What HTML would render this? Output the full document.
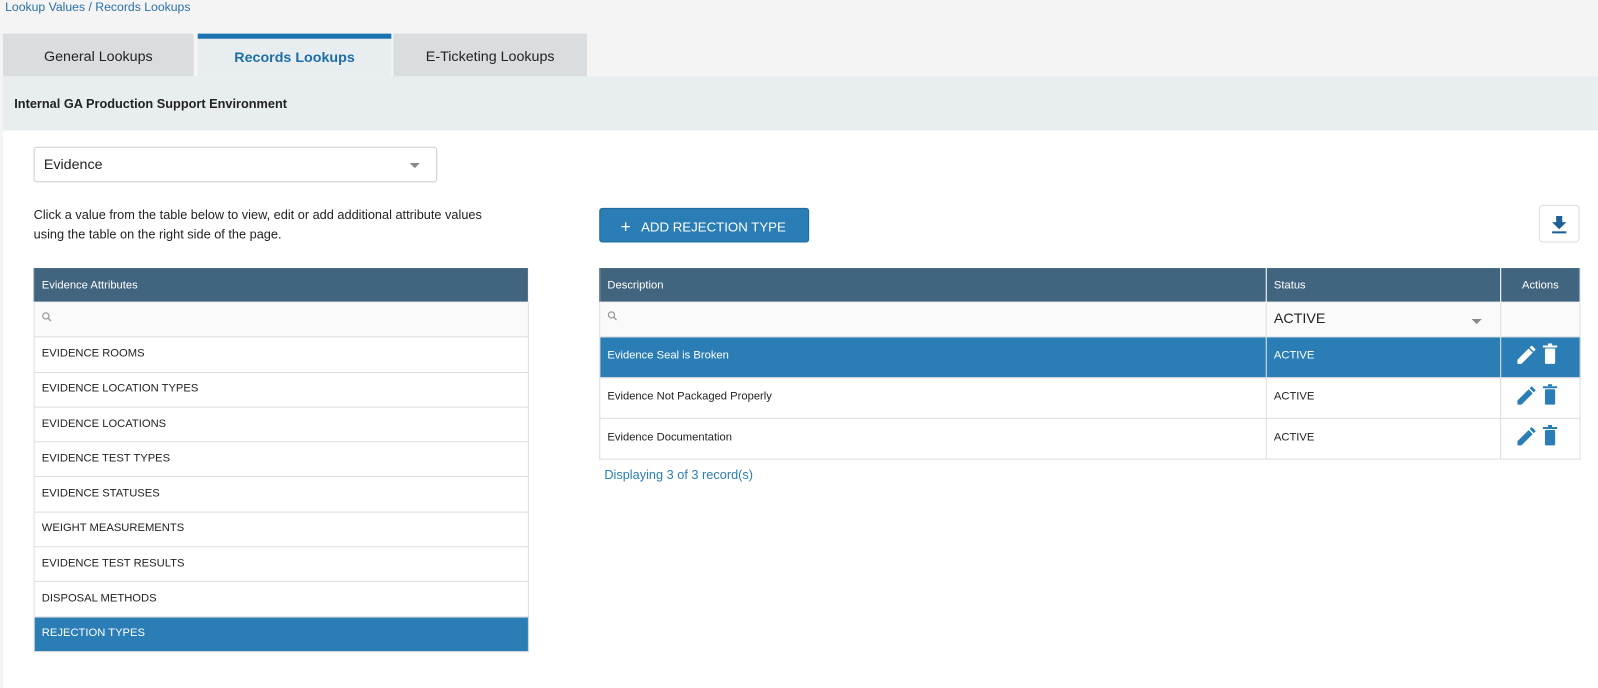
<!DOCTYPE html>
<html><head><style>
*{box-sizing:border-box;margin:0;padding:0}
body{width:1598px;height:672px;background:#f4f4f4;font-family:"Liberation Sans",sans-serif;position:relative;overflow:hidden;color:#222}
#w{position:absolute;left:0;top:0;width:1568px;height:660px;transform:scale(1.0191);transform-origin:0 0}
.a{position:absolute}
.crumb{left:5px;top:0;font-size:12px;color:#2c6fa8}
.tab{top:33px;height:42px;width:187px;background:#d9dddf;font-size:14px;text-align:center;line-height:44px;color:#222}
.main{left:3px;top:75px;width:1565px;height:600px;background:#fff}
.band{left:3px;top:75px;width:1565px;height:53px;background:#e8edf0;font-size:12.5px;font-weight:bold;padding:20px 0 0 11px}
.sel{left:33px;top:144px;width:396px;height:35px;border:1px solid #ccc;border-radius:3px;background:#fff;font-size:14px;padding:8px 0 0 9px}
.tri{width:0;height:0;border-left:5px solid transparent;border-right:5px solid transparent;border-top:5px solid #888}
table{position:absolute;border-collapse:collapse;font-size:11px}
td,th{border:1px solid #ddd;padding:0 7px;text-align:left;font-weight:normal}
th{background:#41657f;color:#fff;height:34px;border-color:#fff #fff #fff #41657f}
.srch td{background:#fafafa;height:34px}
.sel1 td{background:#2a7db5;color:#fff}
.l td{height:34.3px;padding-bottom:2px}
.r td{padding-bottom:4px}
</style></head><body><div id="w">
<div class="a crumb">Lookup Values / Records Lookups</div>
<div class="a tab" style="left:3px">General Lookups</div>
<div class="a tab" style="left:194px;width:190px;background:#e8edf0;border-top:5px solid #1a73b0;line-height:36px;color:#1d6ea8;font-weight:bold">Records Lookups</div>
<div class="a tab" style="left:386px;width:190px">E-Ticketing Lookups</div>
<div class="a main"></div>
<div class="a band">Internal GA Production Support Environment</div>
<div class="a sel">Evidence<div class="a tri" style="right:16px;top:15px"></div></div>
<div class="a" style="left:33px;top:202px;font-size:12.5px;line-height:19px;width:440px">Click a value from the table below to view, edit or add additional attribute values using the table on the right side of the page.</div>
<div class="a" style="left:588px;top:204px;width:206px;height:34px;background:#2a7db5;border:1px solid #1f6a9c;border-radius:3px;color:#fff;font-size:13px;padding:7px 0 0 20px"><span style="font-size:17px;position:relative;top:1px">+</span>&nbsp;&nbsp; ADD REJECTION TYPE</div>
<div class="a" style="left:1510px;top:201px;width:40px;height:37px;border:1px solid #ddd;border-radius:4px;background:#fff">
<svg width="40" height="37" style="position:absolute;left:-1px;top:-1px"><path d="M17 11h6v6h4l-7 7-7-7h4z" fill="#1d5f96"/><rect x="13" y="26" width="14" height="2" fill="#1d5f96"/></svg></div>

<table class="l" style="left:33px;top:262px;width:486px">
<tr><th>Evidence Attributes</th></tr>
<tr class="srch"><td><svg width="10" height="10"><circle cx="4" cy="4" r="3" fill="none" stroke="#999" stroke-width="1.2"/><path d="M6 6l3 3" stroke="#999" stroke-width="1.3"/></svg></td></tr>
<tr><td>EVIDENCE ROOMS</td></tr>
<tr><td>EVIDENCE LOCATION TYPES</td></tr>
<tr><td>EVIDENCE LOCATIONS</td></tr>
<tr><td>EVIDENCE TEST TYPES</td></tr>
<tr><td>EVIDENCE STATUSES</td></tr>
<tr><td>WEIGHT MEASUREMENTS</td></tr>
<tr><td>EVIDENCE TEST RESULTS</td></tr>
<tr><td>DISPOSAL METHODS</td></tr>
<tr class="sel1"><td>REJECTION TYPES</td></tr>
</table>

<table class="r" style="left:588px;top:262px;width:963px">
<tr><th style="width:654px">Description</th><th style="width:230px">Status</th><th style="text-align:center">Actions</th></tr>
<tr class="srch"><td><svg width="10" height="10"><circle cx="4" cy="4" r="3" fill="none" stroke="#999" stroke-width="1.2"/><path d="M6 6l3 3" stroke="#999" stroke-width="1.3"/></svg></td><td style="font-size:14px;position:relative">ACTIVE<div class="a tri" style="right:18px;top:16px"></div></td><td></td></tr>
<tr class="sel1"><td style="height:40px">Evidence Seal is Broken</td><td>ACTIVE</td><td></td></tr>
<tr><td style="height:40px">Evidence Not Packaged Properly</td><td>ACTIVE</td><td></td></tr>
<tr><td style="height:40px">Evidence Documentation</td><td>ACTIVE</td><td></td></tr>
</table>
<svg class="a" style="left:1487px;top:337px" width="50" height="120">
<g fill="#fff"><path d="M2 20l0-4 11-11 4 4-11 11z M14 4l2-2 4 4-2 2z"/><rect x="29" y="5" width="10" height="15" rx="1"/><rect x="27" y="2" width="14" height="2"/><rect x="32" y="0" width="4" height="2"/></g>
<g transform="translate(0,40)" fill="#2a7db5"><path d="M2 20l0-4 11-11 4 4-11 11z M14 4l2-2 4 4-2 2z"/><rect x="29" y="5" width="10" height="15" rx="1"/><rect x="27" y="2" width="14" height="2"/><rect x="32" y="0" width="4" height="2"/></g>
<g transform="translate(0,80)" fill="#2a7db5"><path d="M2 20l0-4 11-11 4 4-11 11z M14 4l2-2 4 4-2 2z"/><rect x="29" y="5" width="10" height="15" rx="1"/><rect x="27" y="2" width="14" height="2"/><rect x="32" y="0" width="4" height="2"/></g>
</svg>
<div class="a" style="left:593px;top:459px;font-size:12.5px;color:#2a7db5">Displaying 3 of 3 record(s)</div>
</div></body></html>
